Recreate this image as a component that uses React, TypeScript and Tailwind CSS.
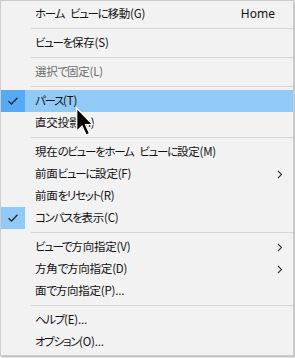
import React from "react";

type Item =
  | { sep: true }
  | {
      sep?: false;
      label: string;
      shortcut?: string;
      disabled?: boolean;
      checked?: boolean;
      active?: boolean;
      sub?: boolean;
    };

const items: Item[] = [
  { label: "ホーム ビューに移動(G)", shortcut: "Home" },
  { sep: true },
  { label: "ビューを保存(S)" },
  { sep: true },
  { label: "選択で固定(L)", disabled: true },
  { sep: true },
  { label: "パース(T)", checked: true, active: true },
  { label: "直交投影(h)" },
  { sep: true },
  { label: "現在のビューをホーム ビューに設定(M)" },
  { label: "前面ビューに設定(F)", sub: true },
  { label: "前面をリセット(R)" },
  { label: "コンパスを表示(C)", checked: true },
  { sep: true },
  { label: "ビューで方向指定(V)", sub: true },
  { label: "方角で方向指定(D)", sub: true },
  { label: "面で方向指定(P)..." },
  { sep: true },
  { label: "ヘルプ(E)..." },
  { label: "オプション(O)..." },
];

function Label({ text }: { text: string }) {
  const parts = text.split(/([\u3040-\u30ff]+| )/).filter((p) => p.length > 0);
  return (
    <>
      {parts.map((p, i) =>
        p === " " ? (
          <span key={i} className="inline-block w-[6px]" />
        ) : /[\u3040-\u30ff]/.test(p) ? (
          <span key={i} className="tracking-[-1.3px]">
            {p}
          </span>
        ) : (
          <span key={i}>{p}</span>
        )
      )}
    </>
  );
}

function Check() {
  return (
    <svg width="12" height="10" viewBox="0 0 12 10" fill="none">
      <path d="M1.5 5.2 L4.5 8 L10.5 1.8" stroke="#2b2b2b" strokeWidth="1.4" />
    </svg>
  );
}

function Chevron() {
  return (
    <svg width="6" height="9" viewBox="0 0 6 9" fill="none">
      <path d="M1 1 L4.5 4.5 L1 8" stroke="#3a3a3a" strokeWidth="1.1" />
    </svg>
  );
}

export default function App() {
  return (
    <div className="relative w-[295px] h-[358px] bg-white overflow-hidden">
      <div
        className="w-[294px] h-[356px] bg-[#f2f2f2] border border-[#cccccc] py-[2px] shadow-[1px_1px_2px_rgba(0,0,0,0.35)] text-[11.5px] text-[#111] [font-feature-settings:'palt']"
        style={{ fontFamily: '"Noto Sans CJK JP", "Noto Sans", sans-serif' }}
      >
        {items.map((it, i) =>
          it.sep ? (
            <div key={i} className="h-[7px] flex items-center pl-[30px]">
              <div className="h-px w-full bg-[#d7d7d7]" />
            </div>
          ) : (
            <div
              key={i}
              className={`h-[22px] flex items-center ${it.active ? "bg-[#91c9f7]" : ""}`}
            >
              <div
                className={`w-[24px] h-[22px] flex items-center justify-center ${
                  it.checked ? (it.active ? "bg-[#56aaf5]" : "bg-[#91c9f7]") : ""
                }`}
              >
                {it.checked && <Check />}
              </div>
              <div
                className={`ml-[10px] flex-1 leading-none tracking-[-0.2px] ${it.disabled ? "text-[#6d6d6d]" : ""}`}
              >
                <Label text={it.label} />
              </div>
              {it.shortcut && (
                <div
                  className="mr-[18px] leading-none text-[12px]"
                  style={{ fontFamily: '"Noto Sans", sans-serif' }}
                >
                  {it.shortcut}
                </div>
              )}
              {it.sub && (
                <div className="mr-[10px] flex items-center">
                  <Chevron />
                </div>
              )}
            </div>
          )
        )}
      </div>
      <svg
        className="absolute left-[76px] top-[107px]"
        width="18"
        height="29"
        viewBox="0 0 12 19"
      >
        <path
          d="M0.5 0.5 L0.5 16 L4 12.5 L6.8 18.5 L9 17.5 L6.3 11.5 L11 11.5 Z"
          fill="#000"
          stroke="#fff"
          strokeWidth="0.8"
        />
      </svg>
    </div>
  );
}
